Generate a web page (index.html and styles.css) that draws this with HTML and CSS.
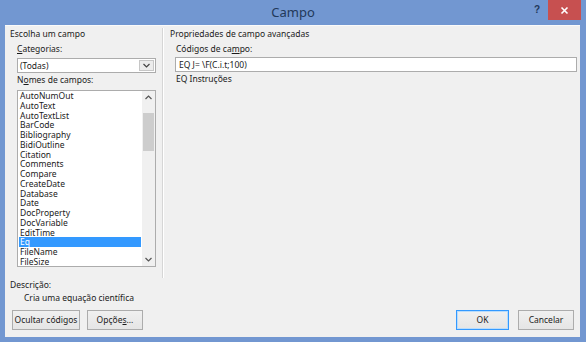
FILE: index.html
```html
<!DOCTYPE html>
<html lang="pt">
<head>
<meta charset="utf-8">
<title>Campo</title>
<link rel="stylesheet" href="styles.css">
</head>
<body>
<div class="window">
  <div class="titlebar">
    <div></div>
    <div class="title">Campo</div>
    <div class="controls">
      <span class="help">?</span>
      <span class="close">
        <svg width="9" height="9" viewBox="0 0 9 9"><path d="M1.5 1.5 L7.5 7.5 M7.5 1.5 L1.5 7.5" stroke="#fff" stroke-width="1.6"/></svg>
      </span>
    </div>
  </div>
  <div class="client">
    <div class="panels">
      <div class="pane-left">
        <div class="heading">Escolha um campo</div>
        <div class="label lbl-cat"><u>C</u>ategorias:</div>
        <div class="combo">
          <span class="combo-text">(Todas)</span>
          <span class="combo-btn">
            <svg width="7" height="5" viewBox="0 0 7 5"><path d="M0.5 1 L3.5 4 L6.5 1" fill="none" stroke="#444" stroke-width="1.2"/></svg>
          </span>
        </div>
        <div class="label lbl-names">N<u>o</u>mes de campos:</div>
        <div class="listbox">
          <div class="items">
            <div class="item">AutoNumOut</div>
            <div class="item">AutoText</div>
            <div class="item">AutoTextList</div>
            <div class="item">BarCode</div>
            <div class="item">Bibliography</div>
            <div class="item">BidiOutline</div>
            <div class="item">Citation</div>
            <div class="item">Comments</div>
            <div class="item">Compare</div>
            <div class="item">CreateDate</div>
            <div class="item">Database</div>
            <div class="item">Date</div>
            <div class="item">DocProperty</div>
            <div class="item">DocVariable</div>
            <div class="item">EditTime</div>
            <div class="item selected">Eq</div>
            <div class="item">FileName</div>
            <div class="item">FileSize</div>
          </div>
          <div class="scrollbar">
            <span class="arrow">
              <svg width="7" height="5" viewBox="0 0 7 5"><path d="M0.5 4 L3.5 1 L6.5 4" fill="none" stroke="#555" stroke-width="1.2"/></svg>
            </span>
            <div class="track"><div class="thumb"></div></div>
            <span class="arrow">
              <svg width="7" height="5" viewBox="0 0 7 5"><path d="M0.5 1 L3.5 4 L6.5 1" fill="none" stroke="#555" stroke-width="1.2"/></svg>
            </span>
          </div>
        </div>
      </div>
      <div class="separator"></div>
      <div class="pane-right">
        <div class="heading">Propriedades de campo avançadas</div>
        <div class="label lbl-codes">Códigos de ca<u>m</u>po:</div>
        <div class="textbox">EQ J= \F(C.i.t;100)</div>
        <div class="label lbl-instr">EQ Instruções</div>
      </div>
    </div>
    <div class="description">
      <div class="desc-label">Descrição:</div>
      <div class="desc-text">Cria uma equação científica</div>
    </div>
    <div class="buttons">
      <div class="btn btn-hide">Ocultar códigos</div>
      <div class="btn btn-opts">Opçõe<u>s</u>...</div>
      <div class="spacer"></div>
      <div class="btn btn-ok">OK</div>
      <div class="btn btn-cancel">Cancelar</div>
    </div>
  </div>
</div>
</body>
</html>
```
FILE: styles.css
```css
* { box-sizing: border-box; }
html, body { margin: 0; padding: 0; }
body {
  width: 586px;
  height: 342px;
  overflow: hidden;
  font-family: "Noto Sans", "Open Sans", sans-serif;
  font-size: 8.5px;
  color: #1a1a1a;
}
u { text-decoration: underline; text-underline-offset: 1px; }

.window {
  width: 586px;
  height: 342px;
  background: #7297d1;
  display: flex;
  flex-direction: column;
}

.titlebar {
  height: 25px;
  display: grid;
  grid-template-columns: 1fr auto 1fr;
  align-items: start;
}
.title {
  font-size: 13px;
  line-height: 24px;
  color: #22395a;
}
.controls {
  justify-self: end;
  display: flex;
  align-items: center;
  margin-right: 5px;
}
.help {
  font-family: "Liberation Sans", sans-serif;
  font-weight: bold;
  font-size: 10px;
  color: #22395a;
  margin-right: 8px;
  line-height: 20px;
}
.close {
  width: 33px;
  height: 20px;
  background: #c75050;
  display: flex;
  align-items: center;
  justify-content: center;
}
.close svg { display: block; }

.client {
  flex: 1;
  margin: 0 6px 5px 5px;
  background: #f0f0f0;
  display: flex;
  flex-direction: column;
  border-top: 1px solid #fafafa;
}

.panels {
  display: flex;
  height: 252px;
}
.pane-left {
  width: 157px;
  padding-left: 5px;
}
.separator {
  width: 2px;
  margin-top: 2px;
  border-left: 1px solid #d6d6d6;
  border-right: 1px solid #ffffff;
}
.pane-right {
  flex: 1;
  padding-left: 6px;
}

.heading {
  line-height: 12px;
  margin-top: 2px;
}
.label { line-height: 12px; }

.lbl-cat { margin: 3px 0 0 7px; }
.combo {
  margin: 3px 0 0 7px;
  width: 139px;
  height: 15px;
  background: #fff;
  border: 1px solid #acacac;
  display: flex;
  align-items: stretch;
}
.combo-text {
  flex: 1;
  line-height: 13px;
  padding-left: 2px;
}
.combo-btn {
  width: 15px;
  margin: 1px;
  border: 1px solid #c6c6c6;
  background: #ececec;
  display: flex;
  align-items: center;
  justify-content: center;
}
.combo-btn svg { display: block; }

.lbl-names { margin: 1px 0 0 7px; }
.listbox {
  margin: 4px 0 0 7px;
  width: 139px;
  height: 177px;
  background: #fff;
  border: 1px solid #acacac;
  display: flex;
}
.items {
  flex: 1;
  padding-left: 1px;
}
.item {
  height: 9.75px;
  line-height: 9.75px;
  padding-left: 1px;
  white-space: nowrap;
}
.item.selected {
  background: #3399ff;
  color: #fff;
  margin-right: 1px;
}
.scrollbar {
  width: 13px;
  background: #f0f0f0;
  display: flex;
  flex-direction: column;
}
.arrow {
  height: 13px;
  display: flex;
  align-items: center;
  justify-content: center;
}
.arrow svg { display: block; }
.track {
  flex: 1;
  padding: 9px 1px 0 1px;
}
.thumb {
  height: 38px;
  background: #cdcdcd;
}

.lbl-codes { margin: 3px 0 0 6px; }
.textbox {
  margin: 2px 0 0 5px;
  width: 402px;
  height: 15px;
  background: #fff;
  border: 1px solid #acacac;
  line-height: 13px;
  padding-left: 3px;
  white-space: nowrap;
}
.lbl-instr { margin: 1px 0 0 6px; }

.description {
  padding-left: 5px;
}
.desc-label { line-height: 12px; margin-top: 1px; }
.desc-text { line-height: 12px; margin: 1px 0 0 14px; }

.buttons {
  display: flex;
  margin-top: auto;
  margin-bottom: 7px;
  padding: 0 6px 0 7px;
}
.spacer { flex: 1; }
.btn {
  height: 20px;
  border: 1px solid #acacac;
  background: linear-gradient(#f0f0f0, #e5e5e5);
  line-height: 18px;
  text-align: center;
  white-space: nowrap;
}
.btn-hide { width: 68px; }
.btn-opts { width: 56px; margin-left: 7px; }
.btn-ok { width: 53px; border-color: #3399ff; box-shadow: inset 0 0 0 1px #b9dcfb; }
.btn-cancel { width: 56px; margin-left: 9px; }
```
